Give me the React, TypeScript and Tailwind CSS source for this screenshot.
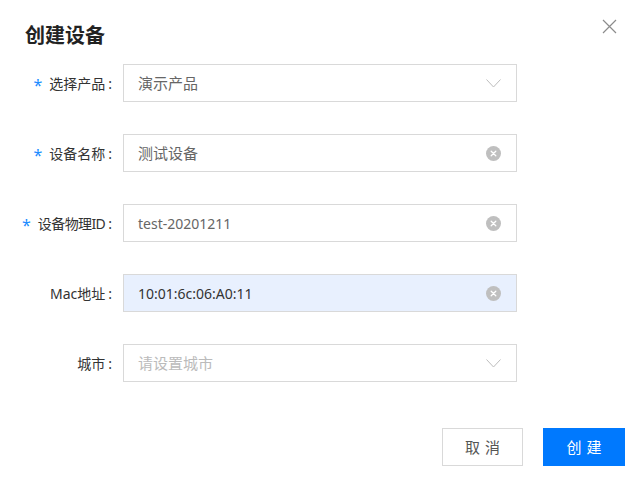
import React from "react";

const FONT = { fontFamily: '"Noto Sans", "Noto Sans CJK SC", sans-serif' };

// CJK runs render a touch wider than the Latin ones in the reference
function Mixed({ text }: { text: string }) {
  const parts = text.split(/([\u4e00-\u9fff]+)/).filter(Boolean);
  return (
    <>
      {parts.map((p, i) =>
        /[\u4e00-\u9fff]/.test(p) ? (
          <span key={i} className="text-[15px]">
            {p}
          </span>
        ) : (
          <span key={i}>{p}</span>
        )
      )}
    </>
  );
}

function Chevron() {
  return (
    <svg width="15" height="9" viewBox="0 0 15 9" fill="none" className="shrink-0">
      <path d="M0.5 0.5 L7.5 8 L14.5 0.5" stroke="#bdbdbd" strokeWidth="1" />
    </svg>
  );
}

function ClearIcon() {
  return (
    <svg width="15" height="15" viewBox="0 0 15 15" className="shrink-0">
      <circle cx="7.5" cy="7.5" r="7.5" fill="#bfbfbf" />
      <path d="M5.2 5.2 L9.8 9.8 M9.8 5.2 L5.2 9.8" stroke="#fff" strokeWidth="1.3" strokeLinecap="round" />
    </svg>
  );
}

type Row = {
  label: string;
  required?: boolean;
  value: string;
  kind: "select" | "input";
  placeholder?: boolean;
  filled?: boolean;
};

const rows: Row[] = [
  { label: "选择产品", required: true, value: "演示产品", kind: "select" },
  { label: "设备名称", required: true, value: "测试设备", kind: "input" },
  { label: "设备物理ID", required: true, value: "test-20201211", kind: "input" },
  { label: "Mac地址", value: "10:01:6c:06:A0:11", kind: "input", filled: true },
  { label: "城市", value: "请设置城市", kind: "select", placeholder: true },
];

export default function App() {
  return (
    <div className="relative h-[494px] w-[637px] bg-white" style={FONT}>
      <div className="flex items-center justify-between pl-[25px] pr-[20px] pt-[22px]">
        <h2 className="text-[20px] font-bold leading-[28px] text-[#222]">创建设备</h2>
        <svg width="15" height="15" viewBox="0 0 15 15" className="-mt-[20px]">
          <path d="M1 1 L14 14 M14 1 L1 14" stroke="#8c8c8c" strokeWidth="1.2" />
        </svg>
      </div>

      <div className="mt-[14px] flex flex-col gap-[32px]">
        {rows.map((r) => (
          <div key={r.label} className="flex items-center">
            <div className="flex w-[123px] shrink-0 items-center justify-end pr-[11px] text-[14px] text-[#333]">
              {r.required && (
                <span className="mr-[7px] mt-[3px] text-[16px] leading-none text-[#1a8cff]">*</span>
              )}
              <span className={r.label.endsWith("ID") ? "tracking-[-0.6px]" : ""}>{r.label}</span>
              <span className="ml-[3px]">:</span>
            </div>
            <div
              className={`flex h-[38px] w-[394px] items-center justify-between border border-[#d9d9d9] pl-[14px] pr-[15px] text-[14px] ${
                r.filled ? "bg-[#e8f0fe]" : "bg-white"
              }`}
            >
              <span
                className={
                  r.placeholder ? "text-[#bbbbbb]" : r.filled ? "text-[#333]" : "text-[#666]"
                }
              >
                <Mixed text={r.value} />
              </span>
              {r.kind === "select" ? <Chevron /> : <ClearIcon />}
            </div>
          </div>
        ))}
      </div>

      <div className="mt-[46px] flex justify-end gap-[20px] pr-[12px]">
        <button className="h-[38px] w-[81px] border border-[#d9d9d9] bg-white text-[15px] tracking-[5px] text-[#555]">
          <span className="-mr-[5px]">取消</span>
        </button>
        <button className="h-[38px] w-[82px] bg-[#0079fe] text-[15px] tracking-[5px] text-white">
          <span className="-mr-[5px]">创建</span>
        </button>
      </div>
    </div>
  );
}
